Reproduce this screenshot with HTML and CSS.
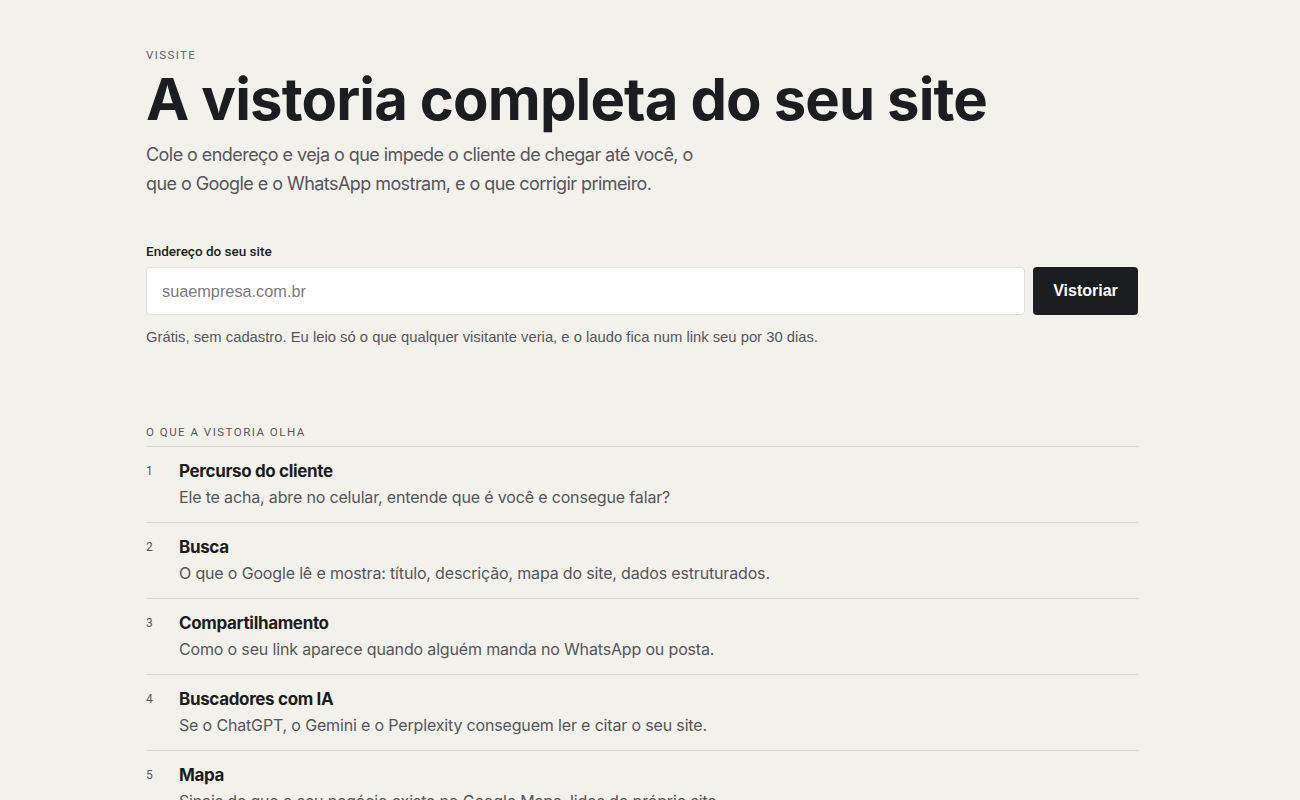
FILE: index.html
```html
<!DOCTYPE html>
<html lang="pt-BR">
<head>
<meta charset="utf-8">
<title>Vissite — A vistoria completa do seu site</title>
<link rel="stylesheet" href="styles.css">
</head>
<body>
<main class="page">
  <header class="hero">
    <p class="eyebrow">VISSITE</p>
    <h1 class="title">A vistoria completa do seu site</h1>
    <p class="lead">Cole o endereço e veja o que impede o cliente de chegar até você, o que o Google e o WhatsApp mostram, e o que corrigir primeiro.</p>
  </header>

  <form class="check" onsubmit="return false">
    <label class="field-label" for="url">Endereço do seu site</label>
    <div class="field-row">
      <input class="field-input" id="url" type="text" placeholder="suaempresa.com.br">
      <button class="field-btn" type="submit">Vistoriar</button>
    </div>
    <p class="field-note">Grátis, sem cadastro. Eu leio só o que qualquer visitante veria, e o laudo fica num link seu por 30 dias.</p>
  </form>

  <section class="scope">
    <h2 class="scope-label">O QUE A VISTORIA OLHA</h2>
    <ol class="scope-list">
      <li class="item"><span class="item-num">1</span><div class="item-body"><h3 class="item-title">Percurso do cliente</h3><p class="item-desc">Ele te acha, abre no celular, entende que é você e consegue falar?</p></div></li>
      <li class="item"><span class="item-num">2</span><div class="item-body"><h3 class="item-title">Busca</h3><p class="item-desc">O que o Google lê e mostra: título, descrição, mapa do site, dados estruturados.</p></div></li>
      <li class="item"><span class="item-num">3</span><div class="item-body"><h3 class="item-title">Compartilhamento</h3><p class="item-desc">Como o seu link aparece quando alguém manda no WhatsApp ou posta.</p></div></li>
      <li class="item"><span class="item-num">4</span><div class="item-body"><h3 class="item-title">Buscadores com IA</h3><p class="item-desc">Se o ChatGPT, o Gemini e o Perplexity conseguem ler e citar o seu site.</p></div></li>
      <li class="item"><span class="item-num">5</span><div class="item-body"><h3 class="item-title">Mapa</h3><p class="item-desc">Sinais de que o seu negócio existe no Google Maps, lidos do próprio site.</p></div></li>
      <li class="item"><span class="item-num">6</span><div class="item-body"><h3 class="item-title">Velocidade</h3><p class="item-desc">Quanto tempo a página leva para aparecer no celular, com internet comum.</p></div></li>
      <li class="item"><span class="item-num">7</span><div class="item-body"><h3 class="item-title">Segurança</h3><p class="item-desc">Cadeado, certificado e os avisos que o navegador mostra ao visitante.</p></div></li>
    </ol>
  </section>
</main>
</body>
</html>
```

FILE: styles.css
```css
* { box-sizing: border-box; }
html, body { margin: 0; padding: 0; }
body {
  background: #f3f1ec;
  color: #1c1d20;
  font-family: "Inter", "Roboto", sans-serif;
  padding-right: 16px;
}
.page {
  max-width: 992px;
  margin: 0 auto;
  padding: 48px 0 120px;
}
.eyebrow {
  margin: 0;
  font-family: "Roboto", sans-serif;
  font-size: 11.5px;
  letter-spacing: 0.12em;
  color: #5d6066;
  line-height: 14px;
}
.title {
  margin: 3px 0 0;
  font-family: "Inter", sans-serif;
  font-weight: 700;
  font-size: 58px;
  line-height: 68px;
  letter-spacing: -0.015em;
  color: #1c1d20;
}
.lead {
  margin: 7px 0 0;
  max-width: 570px;
  font-size: 18px;
  line-height: 29px;
  color: #55565a;
  letter-spacing: -0.031em;
}
.check { margin-top: 45px; }
.field-label {
  display: block;
  font-family: "Roboto", sans-serif;
  font-size: 13.5px;
  font-weight: 500;
  line-height: 16px;
  color: #1c1d20;
  letter-spacing: 0;
}
.field-row {
  display: flex;
  gap: 8px;
  margin-top: 8px;
}
.field-input {
  flex: 1;
  height: 48px;
  border: 1px solid #e2dfd8;
  border-radius: 4px;
  background: #fff;
  padding: 0 15px;
  font-family: "Liberation Sans", Arial, sans-serif;
  font-size: 16.3px;
  color: #1c1d20;
  outline: none;
}
.field-input::placeholder { color: #7a7b7f; }
.field-btn {
  width: 105px;
  height: 48px;
  border: 0;
  border-radius: 4px;
  background: #1c1d20;
  color: #fff;
  font-family: "Liberation Sans", Arial, sans-serif;
  font-weight: 700;
  font-size: 16px;
}
.field-note {
  margin: 13px 0 0;
  font-family: "Liberation Sans", Arial, sans-serif;
  font-size: 14.8px;
  line-height: 18px;
  color: #55565a;
}
.scope { margin-top: 79px; }
.scope-label {
  margin: 0;
  font-family: "Roboto", sans-serif;
  font-size: 11.5px;
  font-weight: 400;
  letter-spacing: 0.13em;
  line-height: 14px;
  color: #55565a;
  padding-bottom: 7px;
  border-bottom: 1px solid #dcd9d2;
}
.scope-list {
  list-style: none;
  margin: 0;
  padding: 0;
}
.item {
  display: flex;
  padding: 13px 0 13px;
  border-bottom: 1px solid #dcd9d2;
}
.item-num {
  width: 33px;
  flex: none;
  padding-top: 4px;
  font-family: "Roboto", sans-serif;
  font-size: 12px;
  color: #55565a;
}
.item-title {
  margin: 0;
  font-size: 17px;
  font-weight: 700;
  line-height: 22px;
  letter-spacing: -0.02em;
  color: #1c1d20;
}
.item-desc {
  margin: 3px 0 0;
  font-size: 16px;
  line-height: 24px;
  letter-spacing: -0.01em;
  color: #55565a;
}
```
